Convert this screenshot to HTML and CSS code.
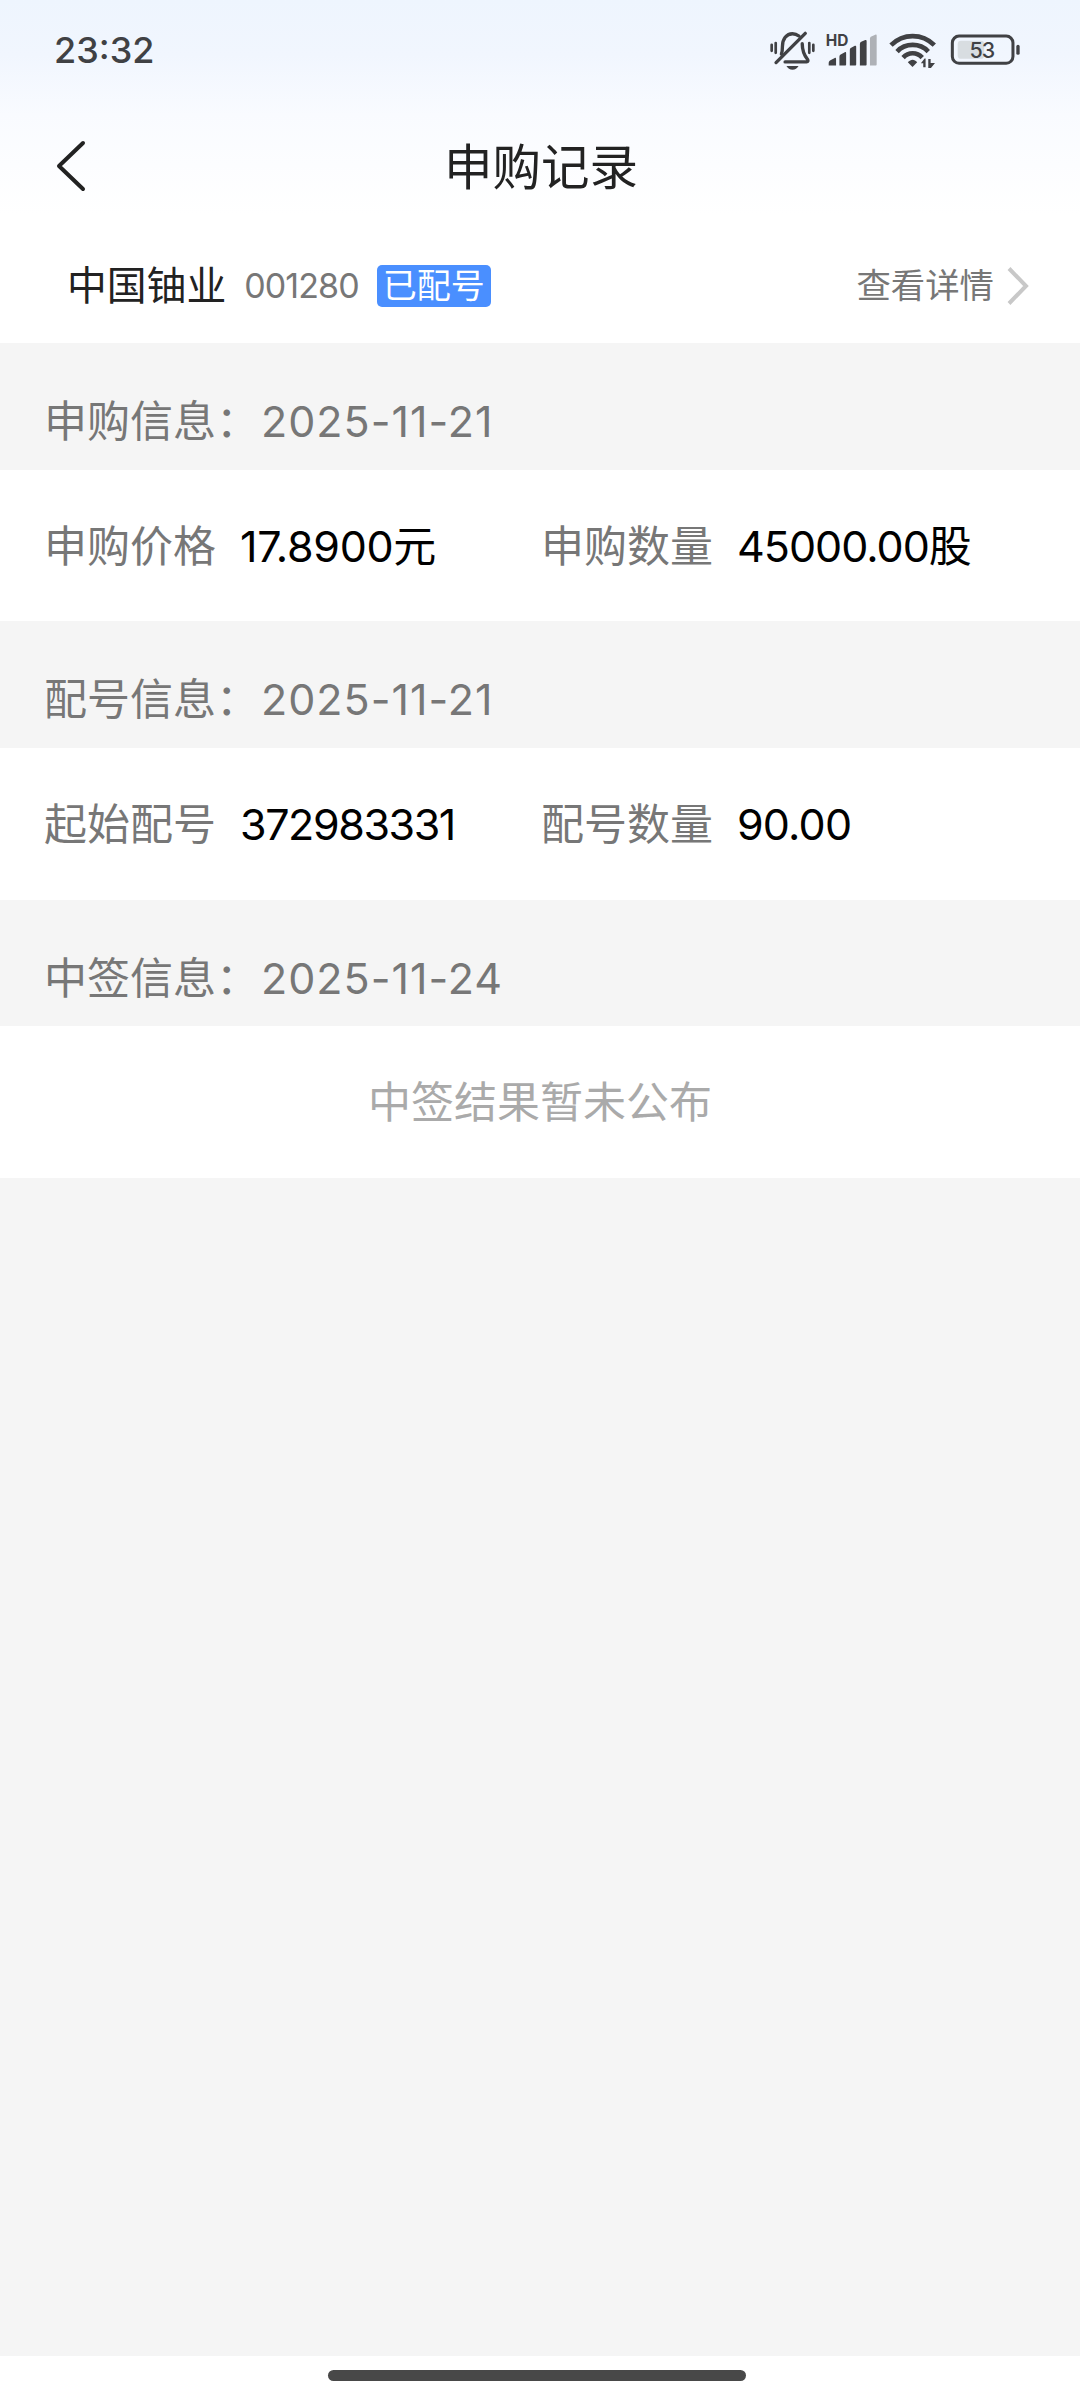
FILE: index.html
```html
<!DOCTYPE html>
<html lang="zh-CN">
<head>
  <meta charset="UTF-8" />
  <meta name="viewport" content="width=device-width, initial-scale=1.0"/>
  <title>申购记录</title>
  <link rel="stylesheet" href="styles.css">
</head>
<body>
  <div class="page">
    <header class="top">
      <div class="status-bar">
        <span class="time">23:32</span>
        <div class="status-icons">
          <!-- mute -->
          <svg class="icon-mute" viewBox="92 58 134 122" fill="none" stroke="#404144" stroke-width="10" stroke-linecap="round" stroke-linejoin="round">
            <path d="M126 130c3-8 3-13 3-23 0-22 12-38 30-38 8 0 14 3 19 7"/>
            <path d="M188 99c0 20 4 32 16 47 2 4 1 7-3 7h-64"/>
            <path d="M110 155L197 68"/>
            <path d="M141 165h36c-4 7-10 11-18 11s-14-4-18-11z" fill="#404144" stroke="none"/>
            <path d="M97 102v18M109 97v29M209 97v29M221 102v18" stroke-width="8"/>
          </svg>
          <!-- signal -->
          <svg class="icon-signal" viewBox="260 58 152 122" fill="#404144">
            <text class="hd" x="259" y="105">HD</text>
            <path d="M268 164v-8c0-3 2-5 4-7l14-8c3-1 4 0 4 3v20z"/>
            <path d="M300 164v-26c0-4 2-6 4-7l12-7c3-1 4 0 4 3v33c0 3-1 4-4 4z"/>
            <path d="M331 164v-46c0-4 2-6 4-7l11-6c3-1 4 0 4 3v52c0 3-1 4-4 4z"/>
            <path d="M361 164v-64c0-4 2-6 4-7l12-5c3-1 4 0 4 3v69c0 3-1 4-4 4z"/>
            <path d="M391 164V84c0-4 2-6 4-7l12-5c3-1 4 0 4 3v85c0 3-1 4-4 4z" fill="#aeb1b6"/>
          </svg>
          <!-- wifi -->
          <svg class="icon-wifi" viewBox="448 58 140 122" fill="none" stroke="#404144" stroke-width="14">
            <path d="M454 103c36-36 93-36 129 0"/>
            <path d="M472 122c25-26 68-26 93 0"/>
            <path d="M490 140c16-17 41-17 57 0"/>
            <path d="M504 154c9-10 20-10 28 0l-14 14z" fill="#404144" stroke="none"/>
            <path d="M543 157l11-14h3v26h-7v-12zM565 144h7v12h13l-12 15h-8z" fill="#404144" stroke="none"/>
          </svg>
          <!-- battery -->
          <svg class="icon-battery" viewBox="630 58 212 122">
            <rect x="653" y="90" width="79" height="54" rx="10" fill="#d8dde1"/>
            <rect x="637" y="76" width="181" height="81" rx="20" fill="none" stroke="#404144" stroke-width="9"/>
            <rect x="828" y="102" width="10" height="30" rx="5" fill="#404144"/>
            <text class="level" x="725" y="142" text-anchor="middle">53</text>
          </svg>
        </div>
      </div>
      <div class="nav">
        <svg class="back" viewBox="0 0 30 52" fill="none" stroke="#222" stroke-width="4" stroke-linecap="round" stroke-linejoin="round">
          <path d="M27 3L3 26L27 49"/>
        </svg>
        <h1>申购记录</h1>
      </div>
      <div class="stock">
        <span class="stock-name">中国铀业</span>
        <span class="stock-code">001280</span>
        <span class="tag">已配号</span>
        <span class="detail">查看详情</span>
        <svg class="arrow" viewBox="0 0 22 38" fill="none" stroke="#c8c8c8" stroke-width="4">
          <path d="M2 1.5L19 19L2 36.5"/>
        </svg>
      </div>
    </header>

    <h2 class="section-title">申购信息：<span class="date">2025-11-21</span></h2>
    <div class="section-row">
      <div class="cell"><span class="label">申购价格</span><span class="value price">17.8900元</span></div>
      <div class="cell"><span class="label">申购数量</span><span class="value amount">45000.00股</span></div>
    </div>

    <h2 class="section-title">配号信息：<span class="date">2025-11-21</span></h2>
    <div class="section-row">
      <div class="cell"><span class="label">起始配号</span><span class="value number">372983331</span></div>
      <div class="cell"><span class="label">配号数量</span><span class="value count">90.00</span></div>
    </div>

    <h2 class="section-title">中签信息：<span class="date">2025-11-24</span></h2>
    <div class="section-row empty">中签结果暂未公布</div>

    <div class="home-area"><div class="home-bar"></div></div>
  </div>
</body>
</html>
```

FILE: styles.css
```css
* {
  box-sizing: border-box;
}

body {
  margin: 0;
  font-family: Inter, "Noto Sans CJK SC", sans-serif;
  background: #f5f5f5;
  color: #000;
}

.page {
  display: flex;
  flex-direction: column;
  width: 1080px;
  height: 2400px;
  overflow: hidden;
}

.top {
  height: 343px;
  background: linear-gradient(#eef5fe 0, #f1f6fe 55px, #f9fbff 115px, #fff 215px);
}

/* status bar */
.status-bar {
  display: flex;
  justify-content: space-between;
  align-items: center;
  height: 100px;
  padding: 0 59px 0 54px;
}

.time {
  font-size: 36px;
  font-weight: 500;
  line-height: 1;
  color: #404144;
}

.status-icons {
  display: flex;
  height: 41px;
}

.status-icons svg {
  height: 41px;
}

.icon-mute {
  width: 45px;
  margin-right: 11px;
}

.icon-signal {
  width: 51px;
  margin-right: 12px;
}

.icon-wifi {
  width: 47px;
  margin-right: 14px;
}

.icon-battery {
  width: 71px;
}

.hd {
  font-size: 46px;
  font-weight: 700;
}

.level {
  font-size: 64px;
  font-weight: 500;
  letter-spacing: -3px;
  fill: #404144;
}

/* title */
.nav {
  display: grid;
  grid-template-columns: 30px 1fr 30px;
  align-items: center;
  height: 132px;
  padding: 0 54px 0 56px;
}

.back {
  width: 30px;
  height: 52px;
}

h1 {
  margin: 0;
  padding-top: 4px;
  font-size: 48.5px;
  font-weight: 400;
  line-height: 60px;
  text-align: center;
  color: #222;
}

/* stock line */
.stock {
  display: flex;
  align-items: center;
  height: 107px;
  padding: 0 51px 0 67px;
  line-height: 42px;
}

.stock-name {
  font-size: 39.8px;
  font-weight: 400;
  color: #222;
}

.stock-code {
  margin-left: 18px;
  font-size: 34px;
  letter-spacing: -0.9px;
  color: #777;
}

.tag {
  width: 114px;
  height: 42px;
  margin-left: 18px;
  border-radius: 5px;
  background: #4a8fff;
  color: #fff;
  font-size: 34px;
  line-height: 42px;
  text-align: center;
}

.detail {
  margin-left: auto;
  font-size: 34.4px;
  color: #777;
}

.arrow {
  width: 22px;
  height: 38px;
  margin-left: 13px;
}

/* sections */
.section-title {
  height: 126.6px;
  margin: 0;
  padding: 29px 44px 0;
  background: #f5f5f5;
  color: #777;
  font-size: 43px;
  font-weight: 400;
  line-height: 98px;
}

.date {
  margin-left: 2px;
  letter-spacing: 1px;
}

.section-row {
  display: grid;
  grid-template-columns: 497px 1fr;
  height: 151.8px;
  padding: 0 44px;
  background: #fff;
  font-size: 43px;
  line-height: 152px;
  white-space: nowrap;
}

.label {
  color: #777;
}

.value {
  margin-left: 24px;
}

.price {
  letter-spacing: -0.3px;
}

.amount {
  letter-spacing: -1px;
}

.number {
  letter-spacing: -1.4px;
}

.count {
  letter-spacing: -0.8px;
}

.empty {
  display: block;
  color: #aaa;
  text-align: center;
}

/* home indicator */
.home-area {
  height: 44px;
  margin-top: auto;
  padding-top: 14px;
  background: #fff;
}

.home-bar {
  width: 418px;
  height: 11px;
  margin: 0 auto;
  border-radius: 6px;
  background: #484848;
  transform: translateX(-3px);
}
```
